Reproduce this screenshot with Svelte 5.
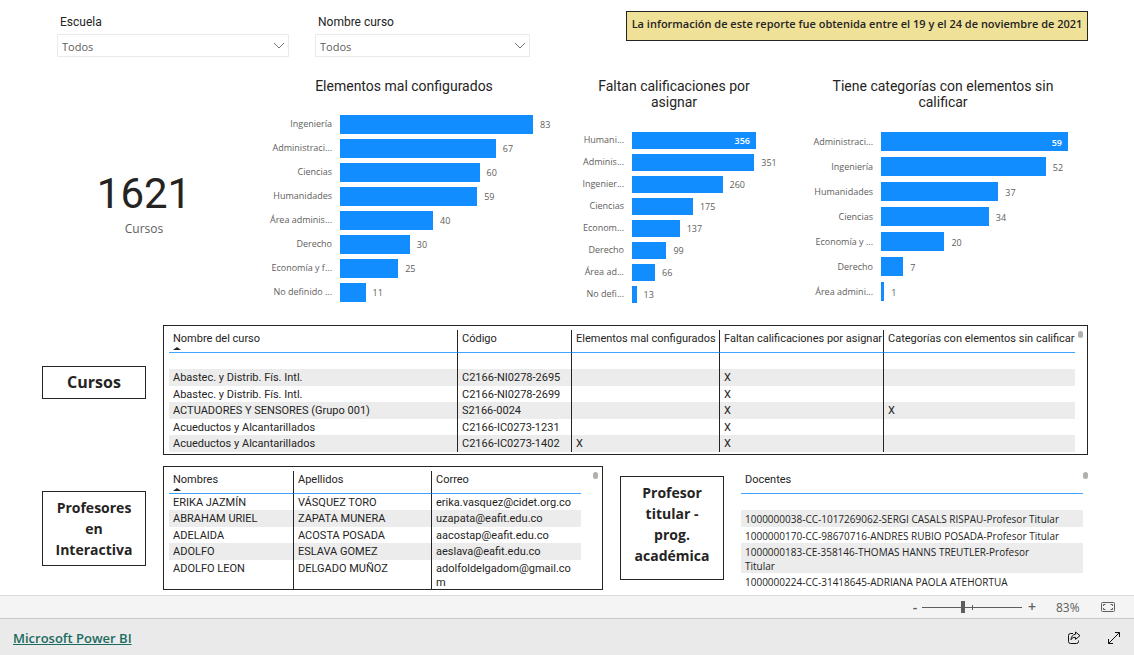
<script>
  let escuela = "Todos";
  let curso = "Todos";
  let zoom = 83;

  const charts = [
    {
      id: "elementos",
      title: "Elementos mal configurados",
      max: 83,
      rows: [
        ["Ingeniería", 83],
        ["Administraci...", 67],
        ["Ciencias", 60],
        ["Humanidades", 59],
        ["Área adminis...", 40],
        ["Derecho", 30],
        ["Economía y f...", 25],
        ["No definido ...", 11],
      ],
    },
    {
      id: "faltan",
      title: "Faltan calificaciones por asignar",
      max: 356,
      inside: true,
      rows: [
        ["Humani...", 356],
        ["Adminis...", 351],
        ["Ingenier...", 260],
        ["Ciencias", 175],
        ["Econom...", 137],
        ["Derecho", 99],
        ["Área ad...", 66],
        ["No defi...", 13],
      ],
    },
    {
      id: "categorias",
      title: "Tiene categorías con elementos sin calificar",
      max: 59,
      inside: true,
      rows: [
        ["Administraci...", 59],
        ["Ingeniería", 52],
        ["Humanidades", 37],
        ["Ciencias", 34],
        ["Economía y ...", 20],
        ["Derecho", 7],
        ["Área admini...", 1],
      ],
    },
  ];

  const cursos = [
    ["", "", "", "", ""],
    ["Abastec. y Distrib. Fís. Intl.", "C2166-NI0278-2695", "", "X", ""],
    ["Abastec. y Distrib. Fís. Intl.", "C2166-NI0278-2699", "", "X", ""],
    ["ACTUADORES Y SENSORES (Grupo 001)", "S2166-0024", "", "X", "X"],
    ["Acueductos y Alcantarillados", "C2166-IC0273-1231", "", "X", ""],
    ["Acueductos y Alcantarillados", "C2166-IC0273-1402", "X", "X", ""],
  ];

  const profesores = [
    ["ERIKA JAZMÍN", "VÁSQUEZ TORO", "erika.vasquez@cidet.org.co"],
    ["ABRAHAM URIEL", "ZAPATA MUNERA", "uzapata@eafit.edu.co"],
    ["ADELAIDA", "ACOSTA POSADA", "aacostap@eafit.edu.co"],
    ["ADOLFO", "ESLAVA GOMEZ", "aeslava@eafit.edu.co"],
    ["ADOLFO LEON", "DELGADO MUÑOZ", "adolfoldelgadom@gmail.com"],
  ];

  const docentes = [
    "",
    "1000000038-CC-1017269062-SERGI CASALS RISPAU-Profesor Titular",
    "1000000170-CC-98670716-ANDRES RUBIO POSADA-Profesor Titular",
    "1000000183-CE-358146-THOMAS HANNS TREUTLER-Profesor\nTitular",
    "1000000224-CC-31418645-ADRIANA PAOLA ATEHORTUA",
  ];
</script>

<main>
  <div class="report">
    <header>
      <div class="filter escuela">
        <label for="escuela">Escuela</label>
        <div class="dropdown">
          <select id="escuela" bind:value={escuela}>
            <option>Todos</option>
          </select>
          <svg width="12" height="8" viewBox="0 0 12 8"><path d="M1 1l5 5 5-5" /></svg>
        </div>
      </div>
      <div class="filter curso">
        <label for="curso">Nombre curso</label>
        <div class="dropdown">
          <select id="curso" bind:value={curso}>
            <option>Todos</option>
          </select>
          <svg width="12" height="8" viewBox="0 0 12 8"><path d="M1 1l5 5 5-5" /></svg>
        </div>
      </div>
      <p class="notice">
        La información de este reporte fue obtenida entre el 19 y el 24 de noviembre de 2021
      </p>
    </header>

    <section class="charts">
      <div class="card">
        <strong>1621</strong>
        <span>Cursos</span>
      </div>
      {#each charts as chart}
        <div class="chart {chart.id}">
          <h2>{chart.title}</h2>
          <div class="plot">
            {#each chart.rows as [name, value]}
              {@const inside = chart.inside && value === chart.max}
              <div class="row">
                <span class="name">{name}</span>
                <div class="track">
                  <div class="bar" style="width: {(value / chart.max) * 100}%">
                    {#if inside}<span class="value inside">{value}</span>{/if}
                  </div>
                  {#if !inside}<span class="value">{value}</span>{/if}
                </div>
              </div>
            {/each}
          </div>
        </div>
      {/each}
    </section>

    <section class="courses">
      <h3 class="tag big">Cursos</h3>
      <div class="box">
        <table class="cursos">
          <thead>
            <tr>
              <th class="c-nombre">Nombre del curso<i class="sort"></i></th>
              <th class="c-codigo">Código</th>
              <th class="c-elementos">Elementos mal configurados</th>
              <th class="c-faltan">Faltan calificaciones por asignar</th>
              <th>Categorías con elementos sin calificar</th>
            </tr>
          </thead>
          <tbody>
            {#each cursos as fila, i}
              <tr class:shaded={i % 2 === 1}>
                {#each fila as celda}<td>{celda}</td>{/each}
              </tr>
            {/each}
          </tbody>
        </table>
        <i class="scroll"></i>
      </div>
    </section>

    <section class="teachers">
      <h3 class="tag">Profesores en Interactiva</h3>
      <div class="box short">
        <table class="profesores">
          <thead>
            <tr>
              <th class="p-nombres">Nombres<i class="sort"></i></th>
              <th class="p-apellidos">Apellidos</th>
              <th>Correo</th>
            </tr>
          </thead>
          <tbody>
            {#each profesores as fila, i}
              <tr class:shaded={i % 2 === 1}>
                {#each fila as celda}<td>{celda}</td>{/each}
              </tr>
            {/each}
          </tbody>
        </table>
        <i class="scroll"></i>
      </div>
      <h3 class="tag tall">Profesor titular - prog. académica</h3>
      <div class="box plain">
        <table class="docentes">
          <thead>
            <tr><th>Docentes</th></tr>
          </thead>
          <tbody>
            {#each docentes as docente, i}
              <tr class:shaded={i % 2 === 1}><td>{docente}</td></tr>
            {/each}
          </tbody>
        </table>
        <i class="scroll"></i>
      </div>
    </section>
  </div>

  <div class="status">
    <button aria-label="Alejar" on:click={() => (zoom -= 10)}>-</button>
    <div class="slider">
      <input type="range" min="5" max="195" bind:value={zoom} aria-label="Zoom" />
      <i class="tick"></i>
    </div>
    <button aria-label="Acercar" on:click={() => (zoom += 10)}>+</button>
    <span class="percent">{zoom}%</span>
    <button class="fit" aria-label="Ajustar a la página">
      <svg width="14" height="10" viewBox="0 0 14 10">
        <rect x="0.5" y="0.5" width="13" height="9" rx="1" />
        <path d="M2.5 4V2.5H4.5M9.5 2.5h2V4M11.5 6v1.5h-2M4.5 7.5h-2V6" />
      </svg>
    </button>
  </div>

  <footer>
    <a href="#powerbi">Microsoft Power BI</a>
    <button aria-label="Compartir">
      <svg width="14" height="14" viewBox="0 0 14 14">
        <path d="M6 2.5H3.5a2 2 0 0 0-2 2v6a2 2 0 0 0 2 2h6a2 2 0 0 0 2-2V9.5" />
        <path d="M8.5 1l4.5 3.7-4.5 3.7V6.3C6.3 6.3 5 7 4 8.7 4.2 5.6 5.800 3.500 8.500 3.200z" />
      </svg>
    </button>
    <button aria-label="Pantalla completa">
      <svg width="14" height="14" viewBox="0 0 14 14">
        <path d="M1.5 12.5l11-11M8 1.5h4.5V6M1.5 8v4.5H6" />
      </svg>
    </button>
  </footer>
</main>

<style>
  :global(body) {
    margin: 0;
    background: #fff;
  }

  main {
    font-family: "Open Sans", "Noto Sans", sans-serif;
    font-size: 11px;
    color: #252423;
  }

  .report {
    padding: 11px 46px 5px 42px;
  }

  header {
    display: flex;
    align-items: flex-start;
    padding-left: 15px;
  }

  .filter label {
    display: block;
    padding: 3px 3px 4px;
    font-family: Roboto, sans-serif;
    font-size: 12px;
    line-height: 16px;
  }

  .escuela {
    flex: 0 1 232px;
    margin-right: 26px;
  }

  .curso {
    flex: 0 1 215px;
  }

  .dropdown {
    display: grid;
    align-items: center;
  }

  .dropdown select {
    grid-area: 1 / 1;
    width: 100%;
    height: 23px;
    padding: 2px 4px 0;
    border: 1px solid #eaeaea;
    border-radius: 0;
    appearance: none;
    background: #fff;
    color: #605e5c;
    font: inherit;
  }

  .dropdown svg {
    grid-area: 1 / 1;
    justify-self: end;
    margin-right: 4px;
    fill: none;
    stroke: #777;
    pointer-events: none;
  }

  .notice {
    flex: 0 1 462px;
    box-sizing: border-box;
    margin: 0 0 0 auto;
    padding: 4px 0 8px;
    border: 1px solid #252423;
    background: #f0e199;
    line-height: 16px;
    font-weight: 600;
    text-align: center;
    white-space: nowrap;
  }

  .charts {
    display: grid;
    grid-template-columns: 204fr 316fr 224fr 302fr;
    margin: 21px 0 20px;
  }

  .card {
    align-self: center;
    display: flex;
    flex-direction: column;
    align-items: center;
    padding-top: 24px;
    color: #605e5c;
    font-size: 12px;
    line-height: 20px;
  }

  .card strong {
    color: #252423;
    font-family: Roboto, sans-serif;
    font-size: 42px;
    line-height: 50px;
    font-weight: 400;
  }

  .chart h2 {
    margin: 0;
    font-family: Roboto, sans-serif;
    font-size: 14px;
    line-height: 16px;
    font-weight: 400;
    text-align: center;
  }

  .faltan h2 {
    padding: 0 30px;
  }

  .categorias {
    padding-left: 12px;
  }

  .categorias h2 {
    padding: 0 30px;
  }

  .plot {
    display: grid;
    margin-top: 19px;
    grid-auto-rows: 24px;
    padding-right: 29px;
  }

  .elementos .plot {
    margin-top: 18px;
  }

  .faltan .plot {
    grid-auto-rows: 22px;
    padding-right: 30px;
  }

  .categorias .plot {
    grid-auto-rows: 25px;
    padding-right: 20px;
  }

  .row {
    display: flex;
    align-items: center;
    gap: 8px;
    color: #605e5c;
    font-size: 9px;
    line-height: 14px;
  }

  .name {
    flex: none;
    width: 86px;
    text-align: right;
  }

  .faltan .name {
    width: 62px;
  }

  .categorias .name {
    width: 75px;
  }

  .track {
    flex: 1;
    display: flex;
    align-items: center;
  }

  .bar {
    flex: none;
    display: flex;
    align-items: center;
    justify-content: flex-end;
    height: 19px;
    background: #118dff;
  }

  .faltan .bar {
    height: 17px;
  }

  .value {
    padding: 2px 0 0 7px;
  }

  .inside {
    padding-right: 6px;
    color: #fff;
    font-weight: 600;
  }

  .courses,
  .teachers {
    display: grid;
    grid-template-columns: 104px 1fr;
    column-gap: 17px;
    align-items: center;
  }

  .teachers {
    grid-template-columns: 104px 440fr 104px 347fr;
    margin-top: 11px;
  }

  .tag {
    margin: 0;
    padding: 5px 8px;
    border: 1px solid #252423;
    font-size: 14px;
    line-height: 21px;
    font-weight: 700;
    text-align: center;
  }

  .big {
    margin-bottom: 16px;
    font-size: 16px;
  }

  .tall {
    padding-bottom: 13px;
  }

  .box {
    position: relative;
    box-sizing: border-box;
    height: 130px;
    padding: 4px 12px 0 5px;
    border: 1px solid #252423;
    overflow: hidden;
  }

  .short {
    height: 124px;
    padding-right: 21px;
  }

  .plain {
    height: 124px;
    padding: 4px 5px 0 0;
    border-color: transparent;
    border-width: 1px 0;
  }

  table {
    width: 100%;
    table-layout: fixed;
    border-collapse: separate;
    border-spacing: 0;
    font-family: Roboto, sans-serif;
  }

  th {
    height: 21px;
    padding: 1px 0 0 4px;
    border-bottom: 1px solid #41a4ff;
    font-weight: 400;
    line-height: 16px;
    text-align: left;
    vertical-align: top;
    white-space: nowrap;
  }

  td {
    height: 14px;
    padding: 2px 4px 0;
    line-height: 14px;
    vertical-align: top;
    overflow-wrap: anywhere;
  }

  .shaded td {
    height: 15px;
    background: #ececec;
  }

  th + th,
  td + td {
    border-left: 1px solid #252423;
  }

  .c-nombre {
    width: 284px;
  }

  .c-codigo {
    width: 109px;
  }

  .c-elementos {
    width: 143px;
  }

  .c-faltan {
    width: 159px;
  }

  .p-nombres {
    width: 120px;
  }

  .p-apellidos {
    width: 133px;
  }

  .profesores td:last-child {
    padding-right: 8px;
  }

  .docentes td {
    font-family: "Open Sans", "Noto Sans", sans-serif;
    font-size: 10px;
    white-space: pre-line;
  }

  .sort {
    display: block;
    width: 0;
    border: 4px solid transparent;
    border-top: 0;
    border-bottom: 3px solid #252423;
  }

  .scroll {
    position: absolute;
    top: 5px;
    right: 4px;
    width: 5px;
    height: 7px;
    border-radius: 3px;
    background: #b3b0ad;
  }

  .plain .scroll {
    right: 0;
  }

  .status {
    display: flex;
    align-items: center;
    justify-content: flex-end;
    height: 22px;
    padding-right: 19px;
    border-top: 1px solid #dcdcdc;
    background: #f4f4f4;
    color: #605e5c;
    font-size: 12px;
  }

  button {
    display: flex;
    align-items: center;
    justify-content: center;
    padding: 0;
    border: 0;
    background: none;
    color: inherit;
    font: inherit;
    cursor: pointer;
  }

  .status button {
    width: 14px;
    font-size: 14px;
    line-height: 20px;
    font-weight: 600;
  }

  .slider {
    display: grid;
    align-items: center;
    width: 100px;
    margin-right: 3px;
  }

  .slider input {
    grid-area: 1 / 1;
    width: 100%;
    height: 12px;
    margin: 0;
    appearance: none;
    background: linear-gradient(#605e5c, #605e5c) center / 100% 1px no-repeat;
  }

  .slider input::-webkit-slider-thumb {
    appearance: none;
    width: 4px;
    height: 12px;
    background: #605e5c;
  }

  .tick {
    grid-area: 1 / 1;
    justify-self: center;
    width: 1px;
    height: 5px;
    background: #605e5c;
    pointer-events: none;
  }

  .percent {
    width: 23px;
    margin: 0 22px 0 17px;
  }

  .status svg,
  footer svg {
    fill: none;
    stroke: #605e5c;
  }

  footer {
    display: flex;
    align-items: center;
    gap: 26px;
    box-sizing: border-box;
    height: 37px;
    padding: 2px 13px 0;
    border-top: 1px solid #c8c8c8;
    background: #eaeaea;
  }

  footer a {
    margin-right: auto;
    color: #1a6b60;
    font-size: 13px;
    font-weight: 600;
  }

  footer svg {
    stroke: #111;
  }
</style>
